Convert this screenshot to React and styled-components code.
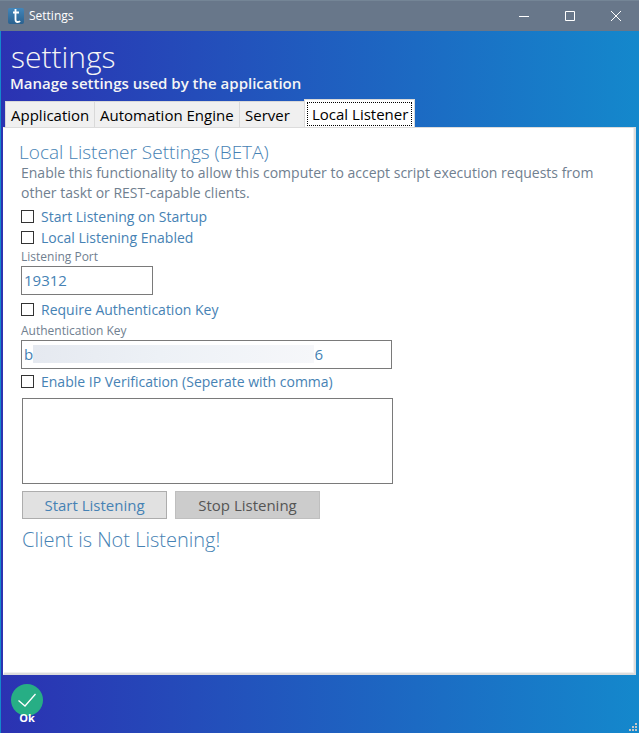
import React, { useState } from "react";
import styled, { createGlobalStyle } from "styled-components";

const GlobalStyle = createGlobalStyle`
  * { box-sizing: border-box; }
  body {
    margin: 0;
    font-family: "Open Sans", "Noto Sans", sans-serif;
    font-size: 15px;
  }
  button, input, textarea { font-family: inherit; }
`;

const Window = styled.div`
  display: flex;
  flex-direction: column;
  min-height: 100vh;
  position: relative;
  background: linear-gradient(90deg, #2b32b2, #1488cc);
`;

const TitleBar = styled.header`
  display: flex;
  align-items: center;
  height: 31px;
  padding-left: 8px;
  background: #68778a;
  border-top: 1px solid #748596;
  color: #fff;
`;

const WindowTitle = styled.span`
  flex: 1;
  margin-left: 5px;
  font-size: 12px;
  line-height: 16px;
`;

const CaptionButton = styled.button`
  display: flex;
  align-items: center;
  justify-content: center;
  width: 46px;
  height: 30px;
  padding: 0;
  border: 0;
  background: transparent;
  color: #fff;
`;

const Body = styled.main`
  flex: 1;
  display: flex;
  flex-direction: column;
  padding: 0 3px 0 2px;
  border-left: 1px solid #1488cc;
`;

const Title = styled.h1`
  margin: 8px 0 0 8px;
  font-size: 30px;
  font-weight: 300;
  line-height: 36px;
  color: #f5f5f5;
`;

const Subtitle = styled.p`
  margin: 0 0 8px 7px;
  font-size: 15px;
  font-weight: 600;
  line-height: 16px;
  color: #f5f5f5;
`;

const Tabs = styled.div`
  display: flex;
  align-items: flex-end;
  height: 28px;
  padding-left: 2px;
`;

const Tab = styled.button`
  height: ${(p) => (p.$active ? 29 : 26)}px;
  width: ${(p) => p.$width}px;
  padding: ${(p) => (p.$active ? "2px" : "0 0 0 5px")};
  margin-bottom: ${(p) => (p.$active ? -1 : 0)}px;
  border: 1px solid #d9d9d9;
  border-right-width: ${(p) => (p.$active ? 1 : 0)}px;
  border-bottom: 0;
  background: ${(p) => (p.$active ? "#fff" : "#f0f0f0")};
  color: #000;
  font-size: 15px;
  line-height: 22px;
  text-align: left;
  white-space: nowrap;
`;

const FocusFrame = styled.span`
  display: block;
  height: 24px;
  padding-left: 4px;
  border: 1px dotted #000;
`;

const Panel = styled.section`
  flex: 1;
  padding: 13px 16px 16px 17px;
  background: #fff;
  border: 1px solid #dcdcdc;
  border-left-color: #fff;
  border-width: 1px 2px 2px 1px;
  box-shadow: inset -1px -1px 0 #f0f0f0;
`;

const Heading = styled.h2`
  margin: 0 0 0 -2px;
  font-size: 19px;
  font-weight: 300;
  line-height: 22px;
  color: #4682b4;
`;

const Description = styled.p`
  max-width: 580px;
  margin: 0 0 3px;
  font-size: 14px;
  line-height: 20px;
  color: #708090;
`;

const CheckRow = styled.label`
  display: flex;
  align-items: center;
  gap: 7px;
  width: fit-content;
  height: 21px;
  font-size: 14px;
  line-height: 20px;
  color: #4682b4;
`;

const Checkbox = styled.input`
  appearance: none;
  width: 13px;
  height: 13px;
  margin: 0;
  border: 1px solid #333;
  background: #fff;
  &:checked { background: #333; box-shadow: inset 0 0 0 2px #fff; }
`;

const FieldLabel = styled.label`
  display: block;
  margin-top: ${(p) => p.$gap || 0}px;
  height: 18px;
  font-size: 12px;
  line-height: 18px;
  color: #708090;
`;

const Field = styled.div`
  position: relative;
  width: ${(p) => p.$width}px;
  max-width: 100%;
  margin-bottom: ${(p) => p.$gap}px;
`;

const TextBox = styled.input`
  display: block;
  width: 100%;
  height: 29px;
  padding: 0 2px 2px;
  border: 1px solid #7a7a7a;
  background: #fff;
  font-size: 15px;
  color: #4682b4;
`;

const Mask = styled.span`
  position: absolute;
  top: 5px;
  left: 12px;
  width: 281px;
  height: 18px;
  background: linear-gradient(100deg, #e5e9f0, #edf1f6 45%, #f6f7fa);
`;

const AddressBox = styled.textarea`
  display: block;
  width: 371px;
  max-width: 100%;
  height: 86px;
  margin: 6px 0 7px 1px;
  padding: 3px;
  border: 1px solid #7a7a7a;
  background: #fff;
  color: #4682b4;
  font-size: 15px;
  resize: none;
`;

const Actions = styled.div`
  display: flex;
  gap: 8px;
  margin-left: 1px;
`;

const ActionButton = styled.button`
  width: 145px;
  height: 28px;
  padding: 0;
  border: 1px solid #adadad;
  background: #e1e1e1;
  color: #4682b4;
  font-size: 15px;
  &:disabled { background: #ccc; border-color: #bfbfbf; color: #555; }
`;

const Status = styled.p`
  margin: 8px 0 0 1px;
  font-size: 20px;
  font-weight: 300;
  line-height: 26px;
  color: #4682b4;
`;

const Footer = styled.footer`
  display: flex;
  align-items: flex-start;
  height: 58px;
  padding: 9px 0 0 8px;
`;

const OkButton = styled.button`
  display: flex;
  flex-direction: column;
  align-items: center;
  padding: 0;
  border: 0;
  background: transparent;
  color: #fff;
  font-size: 11px;
  font-weight: 700;
  line-height: 14px;
  & > span { margin-top: -5px; }
`;

const Grip = styled.svg`
  position: absolute;
  right: 2px;
  bottom: 2px;
`;

const tabs = [
  { name: "Application", width: 89 },
  { name: "Automation Engine", width: 145 },
  { name: "Server", width: 65 },
  { name: "Local Listener", width: 111 },
];

function Check({ children }) {
  const [on, setOn] = useState(false);
  return (
    <CheckRow>
      <Checkbox type="checkbox" checked={on} onChange={() => setOn(!on)} />
      {children}
    </CheckRow>
  );
}

function Logo() {
  return (
    <svg width="16" height="16" viewBox="0 0 16 16" aria-hidden="true">
      <defs>
        <linearGradient id="logo" x1="0" y1="0" x2="0" y2="1">
          <stop offset="0" stopColor="#4286ba" />
          <stop offset="1" stopColor="#2a618f" />
        </linearGradient>
      </defs>
      <rect width="16" height="16" rx="2" fill="url(#logo)" />
      <path d="M7.5 1V11.5Q7.5 14 9.5 14Q11.5 14 12 13M5 4.5H11" fill="none" stroke="#fff" strokeWidth="1.8" />
    </svg>
  );
}

export default function App() {
  const [active, setActive] = useState("Local Listener");
  const [port, setPort] = useState("19312");
  const [key, setKey] = useState("b" + "\u2003".repeat(18) + "\u2002\u20056");
  return (
    <Window>
      <GlobalStyle />
      <TitleBar>
        <Logo />
        <WindowTitle>Settings</WindowTitle>
        <CaptionButton aria-label="Minimize">
          <svg width="10" height="10"><path d="M0 5.5H10" stroke="currentColor" /></svg>
        </CaptionButton>
        <CaptionButton aria-label="Maximize">
          <svg width="10" height="10"><path d="M.5.5H9.5V9.5H.5Z" fill="none" stroke="currentColor" /></svg>
        </CaptionButton>
        <CaptionButton aria-label="Close">
          <svg width="10" height="10"><path d="M0 0L10 10M10 0L0 10" stroke="currentColor" /></svg>
        </CaptionButton>
      </TitleBar>
      <Body>
        <Title>settings</Title>
        <Subtitle>Manage settings used by the application</Subtitle>
        <Tabs role="tablist">
          {tabs.map(({ name, width }) => (
            <Tab key={name} role="tab" aria-selected={name === active} $active={name === active} $width={width} onClick={() => setActive(name)}>
              {name === active ? <FocusFrame>{name}</FocusFrame> : name}
            </Tab>
          ))}
        </Tabs>
        <Panel role="tabpanel">
          <Heading>Local Listener Settings (BETA)</Heading>
          <Description>
            Enable this functionality to allow this computer to accept script execution requests from other taskt or REST-capable clients.
          </Description>
          <Check>Start Listening on Startup</Check>
          <Check>Local Listening Enabled</Check>
          <FieldLabel htmlFor="port">Listening Port</FieldLabel>
          <Field $width={132} $gap={4}>
            <TextBox id="port" value={port} onChange={(e) => setPort(e.target.value)} />
          </Field>
          <Check>Require Authentication Key</Check>
          <FieldLabel htmlFor="key" $gap={2}>Authentication Key</FieldLabel>
          <Field $width={371} $gap={2}>
            <TextBox id="key" value={key} onChange={(e) => setKey(e.target.value)} />
            <Mask />
          </Field>
          <Check>Enable IP Verification (Seperate with comma)</Check>
          <AddressBox aria-label="Verified IP addresses" />
          <Actions>
            <ActionButton>Start Listening</ActionButton>
            <ActionButton disabled>Stop Listening</ActionButton>
          </Actions>
          <Status>Client is Not Listening!</Status>
        </Panel>
        <Footer>
          <OkButton>
            <svg width="32" height="32" viewBox="0 0 32 32" aria-hidden="true">
              <circle cx="16" cy="16" r="16" fill="#27ae85" />
              <path d="M7.5 16.5L14 22L24.5 10" fill="none" stroke="#fff" strokeWidth="1.3" />
            </svg>
            <span>Ok</span>
          </OkButton>
        </Footer>
      </Body>
      <Grip width="8" height="8" aria-hidden="true">
        <path d="M6 0h2v2h-2zM3 3h2v2h-2zM6 3h2v2h-2zM0 6h2v2h-2zM3 6h2v2h-2zM6 6h2v2h-2z" fill="#c5c5c5" />
      </Grip>
    </Window>
  );
}
